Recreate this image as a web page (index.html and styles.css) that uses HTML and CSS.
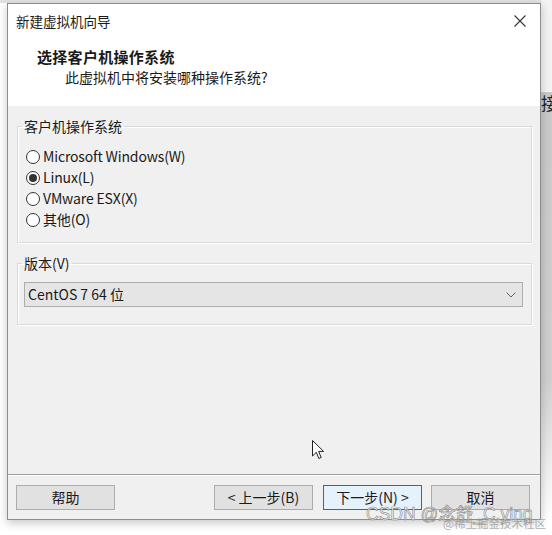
FILE: index.html
```html
<!DOCTYPE html>
<html lang="zh-CN">
<head>
<meta charset="utf-8">
<title>新建虚拟机向导</title>
<link rel="stylesheet" href="styles.css">
</head>
<body>
<div class="screen">
  <div class="dialog">
    <div class="titlebar">
      <span class="title">新建虚拟机向导</span>
      <span class="close">
        <svg width="14" height="14" viewBox="0 0 14 14"><path d="M1.5 1.5 L12.5 12.5 M12.5 1.5 L1.5 12.5" stroke="#333" stroke-width="1.1" fill="none"/></svg>
      </span>
    </div>
    <div class="header">
      <div class="h-title">选择客户机操作系统</div>
      <div class="h-sub">此虚拟机中将安装哪种操作系统?</div>
    </div>
    <div class="body">
      <fieldset class="group">
        <legend>客户机操作系统</legend>
        <div class="radios">
          <div class="radio"><span class="circle"></span>Microsoft Windows(W)</div>
          <div class="radio"><span class="circle checked"></span>Linux(L)</div>
          <div class="radio"><span class="circle"></span>VMware ESX(X)</div>
          <div class="radio"><span class="circle"></span>其他(O)</div>
        </div>
      </fieldset>
      <fieldset class="group group-ver">
        <legend>版本(V)</legend>
        <div class="ver-inner">
          <div class="select">
            <span>CentOS 7 64 位</span>
            <svg width="10" height="6" viewBox="0 0 10 6"><path d="M0.5 0.5 L5 5 L9.5 0.5" stroke="#666" stroke-width="1" fill="none"/></svg>
          </div>
        </div>
      </fieldset>
    </div>
    <div class="footer">
      <button class="btn">帮助</button>
      <button class="btn push">&lt; 上一步(B)</button>
      <button class="btn primary">下一步(N) &gt;</button>
      <button class="btn">取消</button>
    </div>
  </div>
  <div class="behind"><span class="behind-char">接</span></div>

  <svg class="cursor" width="13" height="20" viewBox="0 0 13 20"><path d="M0.5 0.5 L0.5 16 L4.3 12.3 L6.9 18.5 L9.2 17.5 L6.6 11.4 L11.6 11.4 Z" fill="#fff" stroke="#222" stroke-width="1"/></svg>

  <div class="watermark">
    <div class="wm-main">CSDN @念舒_C.ying</div>
    <div class="wm-sub">@稀土掘金技术社区</div>
  </div>
</div>
</body>
</html>
```

FILE: styles.css
```css
* { box-sizing: border-box; }

html, body {
  margin: 0;
  padding: 0;
  background: #fff;
}

body {
  font-family: "Noto Sans CJK SC", "Noto Sans", sans-serif;
  font-size: 14px;
  color: #1a1a1a;
}

.screen {
  position: relative;
  width: 552px;
  height: 535px;
  overflow: hidden;
  display: flex;
  align-items: flex-start;
  padding: 3px 0 0 7px;
  background: linear-gradient(#e2e2e2 0, #e2e2e2 3px, #fff 3px);
}

.dialog {
  width: 534px;
  height: 517px;
  border: 1px solid #8c8c8c;
  background: #f0f0f0;
  display: flex;
  flex-direction: column;
  box-shadow: 0 3px 9px rgba(0, 0, 0, 0.22);
  position: relative;
  z-index: 1;
}

.titlebar {
  height: 34px;
  background: #fff;
  display: flex;
  align-items: center;
  justify-content: space-between;
  padding: 0 13px 0 8px;
}

.title {
  font-size: 13.5px;
  line-height: 20px;
}

.close {
  display: flex;
}

.header {
  background: #fff;
  padding: 9px 0 18px 29px;
  border-bottom: 1px solid #a9a9a9;
}

.h-title {
  font-size: 15px;
  font-weight: 700;
  line-height: 20px;
  letter-spacing: 0.3px;
}

.h-sub {
  line-height: 20px;
  padding-left: 28px;
  font-size: 14px;
}

.body {
  flex: 1;
  padding: 10px 8px 0 9px;
  border-top: 1px solid #fff;
  margin-top: -1px;
}

.group {
  margin: 0;
  padding: 0;
  border: 1px solid #dadada;
  box-shadow: inset 1px 1px 0 #fff, 1px 1px 0 #fff;
}

.group legend {
  margin-left: 4px;
  padding: 0 2px;
  line-height: 20px;
  font-size: 14px;
}

.radios {
  padding: 10px 0 12px 8px;
}

.radio {
  display: flex;
  align-items: center;
  height: 21px;
  gap: 3px;
  line-height: 21px;
  letter-spacing: -0.15px;
}

.circle {
  width: 14px;
  height: 14px;
  border: 1px solid #333;
  border-radius: 50%;
  background: #fff;
  display: flex;
  align-items: center;
  justify-content: center;
}

.circle.checked::after {
  content: "";
  width: 8px;
  height: 8px;
  border-radius: 50%;
  background: #333;
}

.group-ver {
  margin-top: 10px;
}

.ver-inner {
  padding: 9px 8px 17px 6px;
}

.select {
  height: 25px;
  background: #e5e5e5;
  border: 1px solid #adadad;
  display: flex;
  align-items: center;
  justify-content: space-between;
  padding: 0 6px 0 3px;
  line-height: 23px;
}

.footer {
  border-top: 1px solid #a0a0a0;
  box-shadow: inset 0 1px 0 #fff;
  padding: 10px 10px 9px 8px;
  display: flex;
  gap: 9px;
}

.btn {
  width: 99px;
  height: 25px;
  border: 1px solid #adadad;
  background: #e1e1e1;
  font-family: inherit;
  font-size: 14px;
  color: #1a1a1a;
  padding: 0;
  line-height: 23px;
}

.btn.push {
  margin-left: auto;
  margin-right: 1px;
}

.btn.primary {
  background: #e5f1fb;
  border-color: #0078d7;
}

.behind {
  width: 11px;
  height: 100%;
  margin-top: -3px;
  background: linear-gradient(#f3f3f3 0, #f3f3f3 92px, #c9c9c9 92px, #cfcfcf 380px, #f0f0f0 470px, #fff 520px);
  overflow: hidden;
  padding-top: 93px;
}

.behind-char {
  display: block;
  font-size: 17px;
  line-height: 20px;
  color: #222;
  white-space: nowrap;
}

.cursor {
  position: absolute;
  left: 312px;
  top: 440px;
  z-index: 2;
}

.watermark {
  position: absolute;
  left: 366px;
  top: 503px;
  z-index: 3;
  pointer-events: none;
}

.wm-main {
  font-family: "Liberation Sans", "Noto Sans CJK SC", sans-serif;
  font-size: 17.5px;
  line-height: 22px;
  color: rgba(255, 255, 255, 0.75);
  -webkit-text-stroke: 0.7px rgba(120, 120, 120, 0.8);
}

.wm-sub {
  margin: -8px 0 0 77px;
  font-size: 11.5px;
  line-height: 13px;
  white-space: nowrap;
  color: rgba(150, 150, 150, 0.75);
}
```
